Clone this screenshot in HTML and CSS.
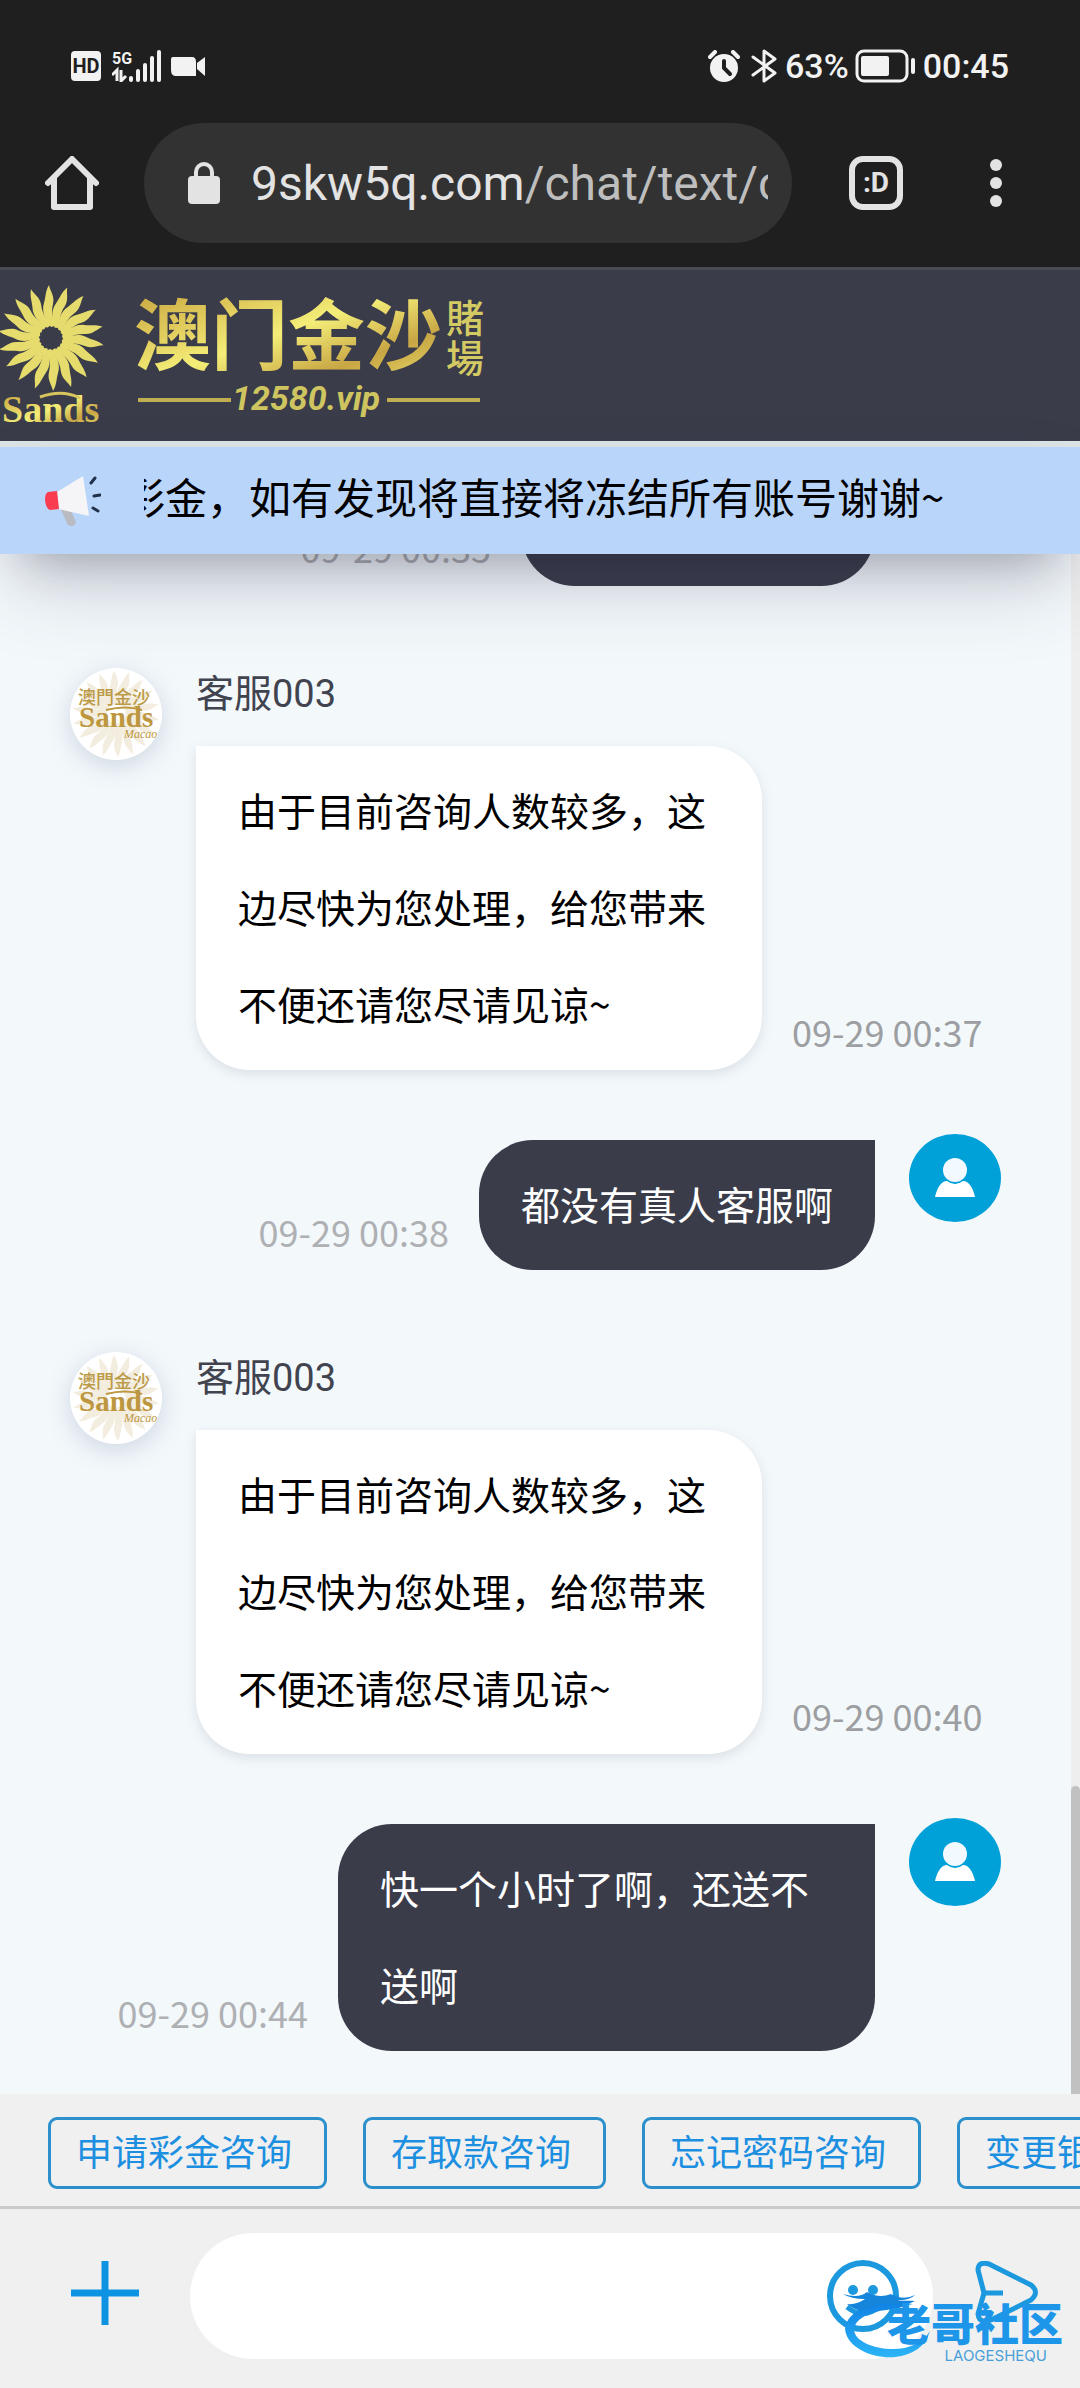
FILE: index.html
```html
<!DOCTYPE html>
<html lang="zh-CN">

<head>
    <meta charset="UTF-8">
    <meta name="viewport" content="width=device-width, initial-scale=1.0">
    <title>在线客服</title>
    <link rel="stylesheet" href="styles.css">
</head>

<body>
    <!-- shared shapes -->
    <svg class="sprite" aria-hidden="true">
        <defs>
            <linearGradient id="gold" x1="0" y1="0" x2="1" y2="1">
                <stop offset="0" stop-color="#c09a38" />
                <stop offset="0.3" stop-color="#e0ca5c" />
                <stop offset="0.5" stop-color="#f4ee78" />
                <stop offset="0.75" stop-color="#c8a644" />
                <stop offset="1" stop-color="#ece06e" />
            </linearGradient>
            <linearGradient id="sky" x1="0" y1="0" x2="0" y2="1">
                <stop offset="0" stop-color="#0f80e4" />
                <stop offset="1" stop-color="#2bb4f6" />
            </linearGradient>
            <path id="ray" d="M0-11C-5-17-10-26-7-35C-5-42-6-46-2-53C-1-47 4-42 2-34C0-27 2-19 4-12Z" />
            <g id="sun">
                <use href="#ray" />
                <use href="#ray" transform="rotate(20)" />
                <use href="#ray" transform="rotate(40)" />
                <use href="#ray" transform="rotate(60)" />
                <use href="#ray" transform="rotate(80)" />
                <use href="#ray" transform="rotate(100)" />
                <use href="#ray" transform="rotate(120)" />
                <use href="#ray" transform="rotate(140)" />
                <use href="#ray" transform="rotate(160)" />
                <use href="#ray" transform="rotate(180)" />
                <use href="#ray" transform="rotate(200)" />
                <use href="#ray" transform="rotate(220)" />
                <use href="#ray" transform="rotate(240)" />
                <use href="#ray" transform="rotate(260)" />
                <use href="#ray" transform="rotate(280)" />
                <use href="#ray" transform="rotate(300)" />
                <use href="#ray" transform="rotate(320)" />
                <use href="#ray" transform="rotate(340)" />
            </g>
            <symbol id="agent" viewBox="0 0 92 92">
                <circle cx="46" cy="46" r="46" fill="#fff" />
                <use href="#sun" transform="translate(46 46) scale(0.82)" fill="#f3eddf" />
                <text x="8" y="36" font-size="18" font-weight="500" fill="#bb9a48" class="cjk">澳門金沙</text>
                <text x="9" y="59" font-size="29" font-weight="700" fill="#bd9740" class="serif">Sands</text>
                <path d="M36 42Q56 37 72 42" fill="none" stroke="#bd9740" stroke-width="2" />
                <text x="54" y="70" font-size="12" font-style="italic" fill="#bd9740" class="serif">Macao</text>
            </symbol>
            <symbol id="user" viewBox="0 0 92 88">
                <ellipse cx="46" cy="44" rx="46" ry="44" fill="#00a0d9" />
                <path d="M26 63C28 54 32 47 38 47Q46 53 54 47C60 47 64 54 66 63Z" fill="#fff" />
                <circle cx="46" cy="36" r="12" fill="#f2f9ff" />
            </symbol>
        </defs>
    </svg>

    <div class="browser">
        <div class="status">
            <svg width="30" height="32" viewBox="0 0 30 32">
                <rect y="1" width="30" height="30" rx="4" fill="#f2f2f2" />
                <text x="15" y="23" text-anchor="middle" font-size="20" font-weight="700" fill="#1f1f1f" class="roboto">HD</text>
            </svg>
            <svg class="signal" width="50" height="32" viewBox="0 0 50 32" fill="#f2f2f2">
                <text x="0" y="14" font-size="16" font-weight="700" class="roboto">5G</text>
                <path d="M0 25L5 20V31M9 20V31L14 26" fill="none" stroke="#f2f2f2" stroke-width="3" />
                <rect x="17" y="26" width="4" height="6" rx="2" />
                <rect x="24" y="19" width="4" height="13" rx="2" />
                <rect x="31" y="13" width="4" height="19" rx="2" />
                <rect x="38" y="6" width="4" height="26" rx="2" />
                <rect x="45" y="0" width="4" height="32" rx="2" />
            </svg>
            <svg width="35" height="32" viewBox="0 0 35 32" fill="#f2f2f2">
                <path d="M2 7H21Q25 7 25 12V26H5Q0 26 0 20V9Q0 7 2 7Z" />
                <path d="M34 7V26L26 19V13Z" />
            </svg>
            <span class="spacer"></span>
            <svg width="32" height="32" viewBox="0 0 32 32">
                <circle cx="16" cy="18" r="14" fill="#f2f2f2" />
                <path d="M2 7L7 2M30 7L25 2" stroke="#f2f2f2" stroke-width="4" stroke-linecap="round" />
                <path d="M16 11V18L22 24" fill="none" stroke="#1f1f1f" stroke-width="4" stroke-linecap="round" />
            </svg>
            <svg class="bluetooth" width="26" height="34" viewBox="0 0 26 34">
                <path d="M2 8L24 24L13 32V2L24 10L2 26" fill="none" stroke="#f2f2f2" stroke-width="3" stroke-linejoin="round" stroke-linecap="round" />
            </svg>
            <span class="percent">63%</span>
            <svg width="60" height="34" viewBox="0 0 60 34">
                <rect x="2" y="2" width="50" height="30" rx="7" fill="none" stroke="#f2f2f2" stroke-width="3" />
                <rect x="6" y="7" width="28" height="20" rx="2" fill="#f2f2f2" />
                <rect x="56" y="9" width="4" height="16" rx="2" fill="#f2f2f2" />
            </svg>
            <span class="clock">00:45</span>
        </div>

        <div class="toolbar">
            <button class="tool home" type="button" aria-label="主页">
                <svg width="54" height="54" viewBox="0 0 54 54" fill="none" stroke="#e3e3e3" stroke-width="6" stroke-linecap="round" stroke-linejoin="round">
                    <path d="M3 27L27 3L51 27" />
                    <path d="M9 23V51H45V23" />
                </svg>
            </button>
            <button class="address" type="button">
                <svg width="32" height="42" viewBox="0 0 32 42">
                    <rect y="14" width="32" height="28" rx="4" fill="#e3e3e3" />
                    <path d="M8 16V10A8 8 0 0 1 24 10V16" fill="none" stroke="#e3e3e3" stroke-width="4" />
                </svg>
                <span class="url">9skw5q.com<span class="path">/chat/text/c</span></span>
            </button>
            <button class="tool tabs" type="button">:D</button>
            <button class="tool more" type="button" aria-label="更多">
                <svg width="12" height="48" viewBox="0 0 12 48" fill="#e3e3e3">
                    <circle cx="6" cy="6" r="6" />
                    <circle cx="6" cy="24" r="6" />
                    <circle cx="6" cy="42" r="6" />
                </svg>
            </button>
        </div>
    </div>

    <header class="header">
        <svg width="500" height="171" viewBox="0 0 500 171" fill="url(#gold)">
            <use href="#sun" x="51" y="68" fill="#e6dc6e" />
            <text x="2" y="152" font-size="38" font-weight="700" class="serif">Sands</text>
            <path d="M40 127Q62 119 80 128" fill="none" stroke="#d8c45c" stroke-width="3" />
            <text x="134" y="94" font-size="77" font-weight="700" class="cjk">澳门金沙</text>
            <text x="446" y="62" font-size="38" font-weight="500" fill="#d4ca64" class="cjk">賭</text>
            <text x="446" y="102" font-size="38" font-weight="500" fill="#d4ca64" class="cjk">場</text>
            <rect x="138" y="128" width="93" height="4" fill="#c0ae50" />
            <rect x="387" y="128" width="93" height="4" fill="#c0ae50" />
            <text x="232" y="140" font-size="34" font-weight="700" font-style="italic" fill="#cfc560" class="roboto">12580.vip</text>
        </svg>
    </header>

    <div class="notice">
        <svg width="58" height="54" viewBox="0 0 58 54">
            <path d="M17 34L26 32L33 48Q31 54 25 51Z" fill="#b8bcc2" />
            <path d="M14 18L40 2L46 42L15 35Z" fill="#f5f5f7" />
            <path d="M5 18L14 17L16 35L7 36Q3 35 2 26Q2 19 5 18Z" fill="#f93c50" />
            <path d="M48 9L52 4M51 22L57 21M50 34L55 37" stroke="#22314a" stroke-width="3" stroke-linecap="round" />
        </svg>
        <div class="marquee">
            <p class="marquee-text">彩金，如有发现将直接将冻结所有账号谢谢~</p>
        </div>
    </div>

    <main class="chat">
        <div class="message mine">
            <time class="time">09-29 00:35</time>
            <div class="bubble bubble-blank"></div>
            <svg class="avatar" width="92" height="88"><use href="#user" /></svg>
        </div>

        <div class="message">
            <svg class="avatar agent" width="92" height="92"><use href="#agent" /></svg>
            <div class="content">
                <div class="name">客服003</div>
                <div class="bubble">由于目前咨询人数较多，这边尽快为您处理，给您带来不便还请您尽请见谅~</div>
            </div>
            <time class="time">09-29 00:37</time>
        </div>

        <div class="message mine">
            <time class="time">09-29 00:38</time>
            <div class="bubble">都没有真人客服啊</div>
            <svg class="avatar" width="92" height="88"><use href="#user" /></svg>
        </div>

        <div class="message">
            <svg class="avatar agent" width="92" height="92"><use href="#agent" /></svg>
            <div class="content">
                <div class="name">客服003</div>
                <div class="bubble">由于目前咨询人数较多，这边尽快为您处理，给您带来不便还请您尽请见谅~</div>
            </div>
            <time class="time">09-29 00:40</time>
        </div>

        <div class="message mine">
            <time class="time">09-29 00:44</time>
            <div class="bubble">快一个小时了啊，还送不送啊</div>
            <svg class="avatar" width="92" height="88"><use href="#user" /></svg>
        </div>

        <div class="scrollbar"><div class="thumb"></div></div>
    </main>

    <nav class="quick">
        <button class="chip" type="button">申请彩金咨询</button>
        <button class="chip" type="button">存取款咨询</button>
        <button class="chip" type="button">忘记密码咨询</button>
        <button class="chip" type="button">变更银行卡</button>
    </nav>

    <form class="composer">
        <button class="tool plus" type="button" aria-label="添加">
            <svg width="68" height="66" viewBox="0 0 68 66" stroke="#0e93e3" stroke-width="7">
                <path d="M34 1V65M0 33H68" />
            </svg>
        </button>
        <div class="field">
            <input class="text-input" type="text" aria-label="输入消息">
            <button class="tool emoji" type="button" aria-label="表情">
                <svg width="72" height="72" viewBox="0 0 72 72">
                    <circle cx="36" cy="36" r="33" fill="none" stroke="#1b98de" stroke-width="6" />
                    <circle cx="26" cy="30" r="5" fill="#1b98de" />
                    <circle cx="46" cy="30" r="5" fill="#1b98de" />
                    <path d="M20 47Q36 60 52 47" fill="none" stroke="#1b98de" stroke-width="5" />
                </svg>
            </button>
        </div>
        <button class="tool send" type="submit" aria-label="发送">
            <svg width="64" height="64" viewBox="0 0 64 64" fill="none" stroke="#1b98de" stroke-width="5" stroke-linejoin="round">
                <path d="M3 9Q3 0 14 3L56 24Q65 31 56 39L16 59Q4 63 3 53L9 32Z" />
                <path d="M9 32H28" />
            </svg>
        </button>

        <div class="stamp">
            <svg class="swirl" width="90" height="70" viewBox="0 0 90 70">
                <path d="M72 12C34 10 4 20 2 40C4 60 32 70 52 68C70 66 82 58 87 42C80 54 66 60 50 60C30 60 11 52 11 40C13 28 30 21 54 20Z" fill="url(#sky)" />
                <path d="M0 5Q16 10 24 3Q36 10 48 5Q60 12 72 6Q66 12 54 11Q64 15 70 15Q58 18 46 14Q30 16 18 22Q10 20 4 15Q14 16 22 10Q8 10 0 5Z" fill="#1585dc" />
            </svg>
            <span class="stamp-name">老哥社区</span>
            <span class="stamp-latin">LAOGESHEQU</span>
        </div>
    </form>
</body>

</html>
```
FILE: styles.css
```css
:root {
    --cjk: "Noto Sans CJK SC", sans-serif;
    --roboto: Roboto, "Noto Sans CJK SC", sans-serif;
    --dark: #3a3c4a;
    --blue: #1c8fe0;
    --page: #f3f8fb;
    --bar: #f0f0f0;
}

* {
    margin: 0;
    padding: 0;
    box-sizing: border-box;
}

body {
    font-family: var(--cjk);
    background-color: var(--page);
    height: 100vh;
    display: flex;
    flex-direction: column;
    overflow: hidden;
}

svg {
    display: block;
    flex: none;
}

.sprite {
    position: absolute;
    width: 0;
    height: 0;
}

.cjk {
    font-family: var(--cjk);
}

.roboto {
    font-family: var(--roboto);
}

.serif {
    font-family: "Liberation Serif", serif;
}

.tool {
    flex: none;
    border: none;
    background: none;
}

/* Phone status bar and browser toolbar */
.browser {
    background-color: #1f1f1f;
    font-family: var(--roboto);
}

.status {
    display: flex;
    align-items: center;
    padding: 48px 71px 0;
    height: 84px;
    color: #f2f2f2;
    font-size: 34px;
    font-weight: 500;
}

.signal {
    margin: 0 9px 0 11px;
}

.spacer {
    flex: 1;
}

.bluetooth {
    margin: 0 8px 0 11px;
}

.percent {
    margin-right: 6px;
}

.clock {
    margin-left: 8px;
}

.toolbar {
    display: flex;
    align-items: center;
    padding: 39px 78px 24px 45px;
}

.address {
    flex: 1;
    min-width: 0;
    display: flex;
    align-items: center;
    height: 120px;
    margin: 0 57px 0 45px;
    padding: 0 24px 0 44px;
    border: none;
    border-radius: 60px;
    background-color: #323232;
}

.url {
    flex: 1;
    min-width: 0;
    margin-left: 31px;
    overflow: hidden;
    white-space: nowrap;
    text-align: left;
    font-family: var(--roboto);
    font-size: 48px;
    color: #e3e3e3;
}

.path {
    color: #bebebe;
}

.tabs {
    width: 54px;
    height: 54px;
    border: 6px solid #e3e3e3;
    border-radius: 14px;
    color: #e3e3e3;
    font-family: var(--roboto);
    font-size: 28px;
    font-weight: 700;
    line-height: 38px;
}

.more {
    margin-left: 87px;
}

/* Site header */
.header {
    background-color: var(--dark);
    border-top: 3px solid #4b4b53;
    border-bottom: 6px solid #dce4e6;
}

.notice {
    position: relative;
    z-index: 1;
    display: flex;
    align-items: center;
    height: 107px;
    padding-left: 43px;
    background-color: #bad5fa;
    box-shadow: 0 39px 81px -15px rgba(50, 50, 93, 0.25), 0 24px 48px -24px rgba(0, 0, 0, 0.3);
}

.marquee {
    flex: 1;
    margin-left: 43px;
    padding-bottom: 10px;
    overflow: hidden;
}

.marquee-text {
    margin-left: -21px;
    font-size: 42px;
    white-space: nowrap;
}

/* Messages */
.chat {
    position: relative;
    flex: 1;
    min-height: 0;
    overflow: hidden;
    display: flex;
    flex-direction: column;
    justify-content: flex-end;
    padding: 0 79px 43px 70px;
}

.message {
    flex: none;
    display: flex;
    align-items: flex-end;
    margin-top: 82px;
}

.mine {
    justify-content: flex-end;
    margin-top: 64px;
}

.avatar {
    align-self: flex-start;
}

.agent {
    margin-right: 34px;
    border-radius: 50%;
    box-shadow: 0 6px 24px rgba(120, 140, 170, 0.3);
}

.mine .avatar {
    margin-left: 34px;
}

.name {
    margin-bottom: 26px;
    font-family: var(--roboto);
    font-size: 38px;
    line-height: 52px;
    color: #41444f;
}

.bubble {
    max-width: 566px;
    padding: 15px 42px 18px;
    border-radius: 0 54px 54px 54px;
    background-color: #fff;
    box-shadow: 0 4px 12px rgba(120, 130, 150, 0.2);
    font-size: 39px;
    line-height: 97px;
    color: #000;
}

.mine .bubble {
    max-width: 537px;
    margin-top: 6px;
    border-radius: 54px 0 54px 54px;
    background-color: var(--dark);
    box-shadow: none;
    color: #fff;
}

.bubble-blank {
    width: 354px;
    height: 130px;
}

.time {
    flex: none;
    margin: 0 0 12px 30px;
    font-size: 36px;
    line-height: 54px;
    color: #9c9ea1;
}

.mine .time {
    margin: 0 30px 12px 0;
    color: #aeb0b3;
}

.scrollbar {
    position: absolute;
    top: 0;
    right: 0;
    bottom: 0;
    width: 9px;
    display: flex;
    align-items: flex-end;
    background-color: #efeeee;
}

.thumb {
    width: 100%;
    height: 20%;
    border-radius: 5px 5px 0 0;
    background-color: #c1c1c1;
}

/* Quick questions */
.quick {
    display: flex;
    gap: 36px;
    padding: 23px 0 17px 48px;
    overflow: hidden;
    background-color: var(--bar);
    border-bottom: 3px solid #cbcbcb;
}

.chip {
    flex: none;
    height: 72px;
    padding: 0 32px 6px 25px;
    border: 3px solid #2b90cc;
    border-radius: 9px;
    background: none;
    font-family: var(--cjk);
    font-size: 36px;
    line-height: 60px;
    color: var(--blue);
}

/* Message box */
.composer {
    position: relative;
    display: flex;
    align-items: center;
    padding: 24px 41px 29px 71px;
    background-color: var(--bar);
}

.plus,
.send {
    margin-bottom: 6px;
}

.field {
    position: relative;
    flex: 1;
    margin: 0 42px 0 51px;
}

.text-input {
    display: block;
    width: 100%;
    height: 126px;
    padding: 0 120px 0 60px;
    border: none;
    border-radius: 63px;
    background-color: #fff;
    font-family: var(--cjk);
    font-size: 39px;
}

.emoji {
    position: absolute;
    top: 27px;
    right: 34px;
}

/* Community stamp over the message box */
.stamp {
    position: absolute;
    right: 17px;
    bottom: 24px;
    width: 220px;
    height: 75px;
    pointer-events: none;
}

.swirl {
    position: absolute;
    top: 0;
    left: 0;
}

.stamp-name {
    position: absolute;
    right: 0;
    top: 8px;
    font-size: 44px;
    font-weight: 900;
    line-height: 50px;
    color: #1d96ea;
}

.stamp-latin {
    position: absolute;
    right: 16px;
    bottom: 0;
    font-family: Inter, sans-serif;
    font-size: 15px;
    line-height: 16px;
    color: #4a9fd8;
}
```
